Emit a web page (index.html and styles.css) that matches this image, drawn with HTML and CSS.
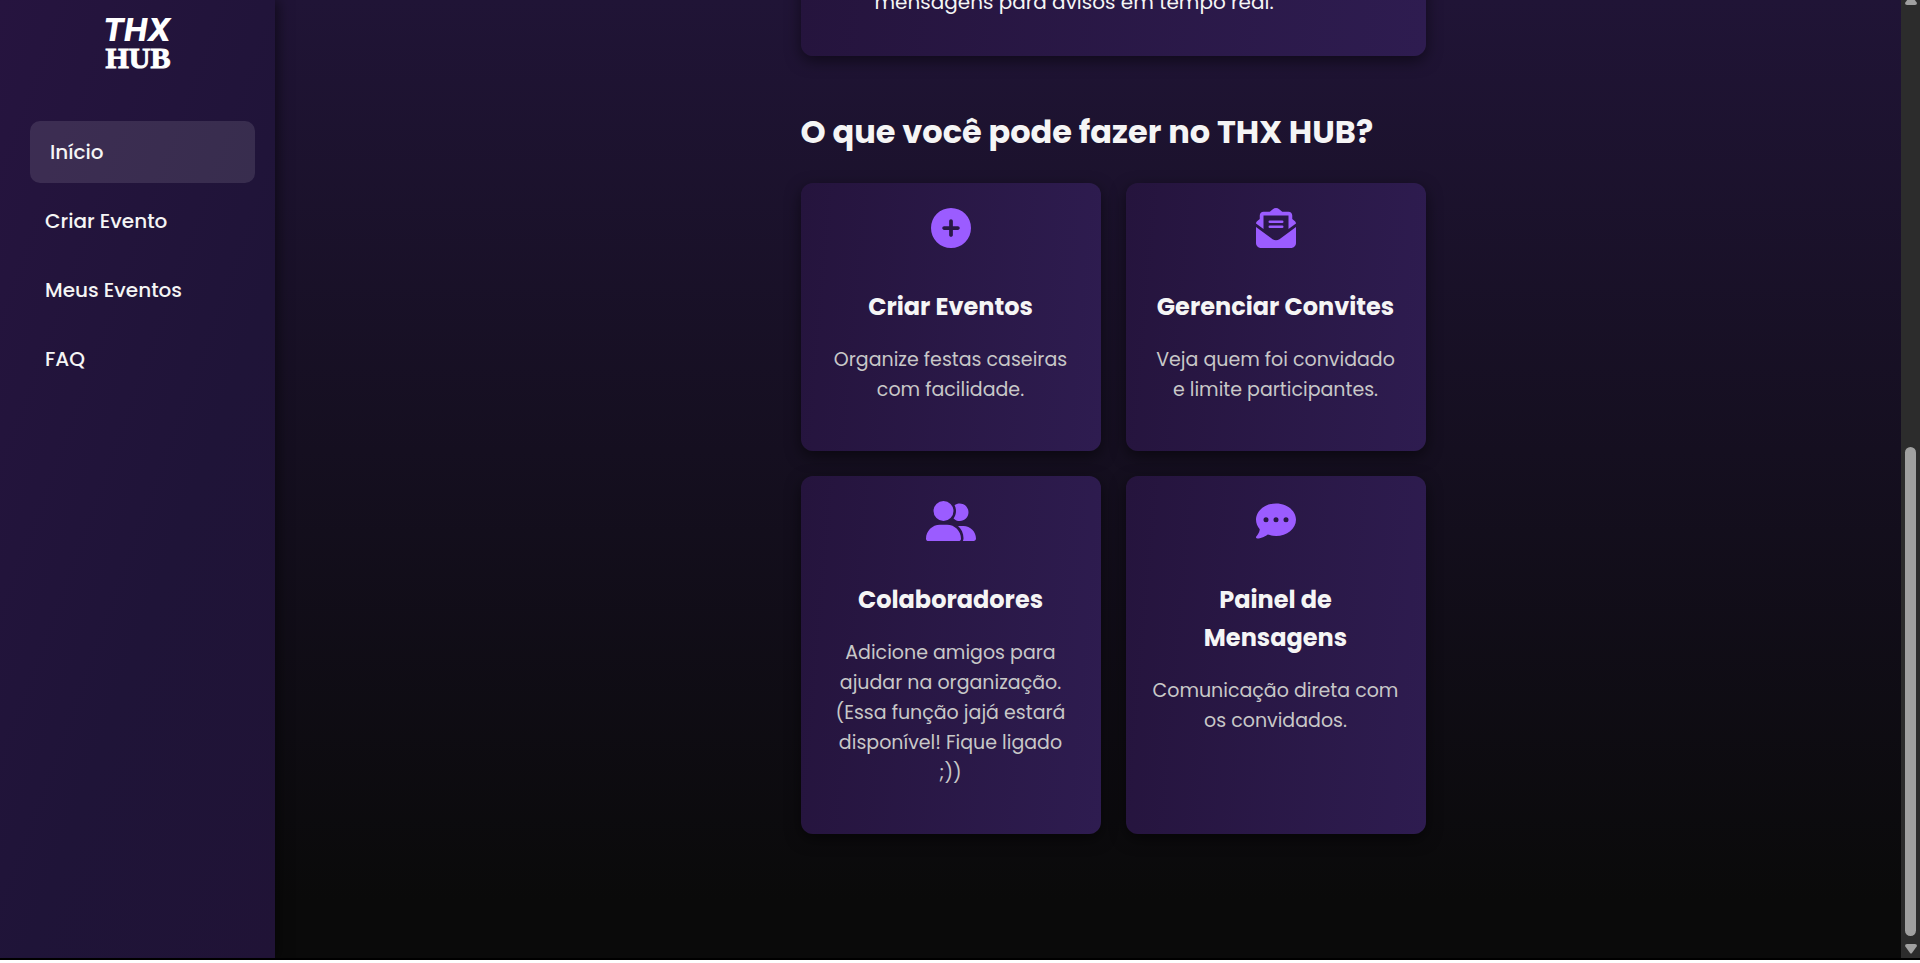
FILE: index.html
```html
<!DOCTYPE html>
<html lang="pt-BR">
<head>
<meta charset="utf-8">
<title>THX HUB</title>
<link rel="stylesheet" href="styles.css">
</head>
<body>
<div class="app">
  <aside class="sidebar">
    <svg class="logo" viewBox="0 0 90 72" role="img" aria-label="THX HUB">
      <text class="logo-top" x="44" y="41" text-anchor="middle">THX</text>
      <text class="logo-bottom" x="45" y="68" text-anchor="middle">HUB</text>
    </svg>
    <nav class="nav">
      <a class="nav-link active" href="#inicio">Início</a>
      <a class="nav-link" href="#criar">Criar Evento</a>
      <a class="nav-link" href="#eventos">Meus Eventos</a>
      <a class="nav-link" href="#faq">FAQ</a>
    </nav>
  </aside>
  <main class="main">
    <div class="content">
      <section class="intro">
        <p>mensagens para avisos em tempo real.</p>
      </section>
      <h2 class="title">O que você pode fazer no THX HUB?</h2>
      <div class="grid">
        <article class="card">
          <svg class="icon" viewBox="0 0 512 512"><path d="M256 512a256 256 0 1 0 0-512 256 256 0 1 0 0 512m-24-168v-64h-64c-13.300 0-24-10.700-24-24s10.700-24 24-24h64v-64c0-13.300 10.700-24 24-24s24 10.700 24 24v64h64c13.300 0 24 10.700 24 24s-10.700 24-24 24h-64v64c0 13.300-10.700 24-24 24s-24-10.700-24-24"/></svg>
          <h3>Criar Eventos</h3>
          <p>Organize festas caseiras com facilidade.</p>
        </article>
        <article class="card">
          <svg class="icon" viewBox="0 0 512 512"><path d="M215.400 16.400C226.800 6 241 0 256 0s29.200 6 40.600 16.400L336 48h80c26.500 0 48 21.500 48 48v44.500l31 25c10.500 8.500 17 20 17 31.500L416 268V96H96v172L0 197c0-11.500 6.500-23 17-31.500l31-25V96c0-26.500 21.500-48 48-48h80zM0 242l212 157c26 19 62 19 88 0l212-157v206c0 35.300-28.700 64-64 64H64c-35.300 0-64-28.700-64-64zM176 160h160a16 16 0 0 1 0 32H176a16 16 0 0 1 0-32m0 64h160a16 16 0 0 1 0 32H176a16 16 0 0 1 0-32"/></svg>
          <h3>Gerenciar Convites</h3>
          <p>Veja quem foi convidado e limite participantes.</p>
        </article>
        <article class="card">
          <svg class="icon icon-wide" viewBox="0 0 640 512"><path d="M96 128a128 128 0 1 1 256 0A128 128 0 1 1 96 128M0 482.300C0 383.800 79.800 304 178.300 304h91.400C368.200 304 448 383.800 448 482.300c0 16.400-13.300 29.700-29.700 29.700H29.700C13.300 512 0 498.700 0 482.300M609.300 512H471.400c5.400-9.400 8.600-20.300 8.600-32v-8c0-60.700-27.100-115.200-69.800-151.800 2.400-.1 4.700-.2 7.100-.2h61.400C567.800 320 640 392.200 640 481.300c0 17-13.800 30.700-30.700 30.700M432 256c-31 0-59-12.600-79.300-32.900C372.400 196.500 384 163.600 384 128c0-26.800-6.600-52.100-18.300-74.300C384.300 40.100 407.200 32 432 32c61.900 0 112 50.100 112 112s-50.100 112-112 112"/></svg>
          <h3>Colaboradores</h3>
          <p>Adicione amigos para ajudar na organização. (Essa função jajá estará disponível! Fique ligado ;))</p>
        </article>
        <article class="card">
          <svg class="icon" viewBox="0 0 512 512"><path d="M256 448c141.400 0 256-93.100 256-208S397.400 32 256 32 0 125.100 0 240c0 45.100 17.700 86.800 47.700 120.900-1.900 24.500-11.400 46.300-21.400 62.900-5.500 9.200-11.100 16.600-15.200 21.600-2.100 2.500-3.700 4.400-4.900 5.700-.6.600-1 1.100-1.300 1.400l-.3.300A16 16 0 0 0 16 480c28.700 0 57.600-8.900 81.600-19.300 22.900-10 42.400-21.900 54.300-30.600 31.800 11.500 67 17.900 104.100 17.900M128 208a32 32 0 1 1 0 64 32 32 0 1 1 0-64m128 0a32 32 0 1 1 0 64 32 32 0 1 1 0-64m96 32a32 32 0 1 1 64 0 32 32 0 1 1-64 0"/></svg>
          <h3>Painel de Mensagens</h3>
          <p>Comunicação direta com os convidados.</p>
        </article>
      </div>
    </div>
  </main>
  <div class="scrollbar" aria-hidden="true">
    <svg class="arrow" viewBox="0 0 12 10"><path d="M5 1Q6 0 7 1L12 8Q12 10 10 10H2Q0 10 0 8Z"/></svg>
    <div class="track"><div class="thumb"></div></div>
    <svg class="arrow" viewBox="0 0 12 10"><path d="M5 9Q6 10 7 9L12 2Q12 0 10 0H2Q0 0 0 2Z"/></svg>
  </div>
</div>
</body>
</html>
```
FILE: styles.css
```css
* { box-sizing: border-box; }

body {
  margin: 0;
  height: 100vh;
  overflow: hidden;
  padding-bottom: 3px;
  background: #fff;
  font-family: Poppins, Inter, sans-serif;
  font-size: 19px;
  line-height: 30px;
  color: #f5f5f5;
}

.app {
  display: flex;
  height: 100%;
  overflow: hidden;
  border-bottom: 2px solid #000;
  background: linear-gradient(180deg, #201436 0%, #0a0a0a 94%);
}

.sidebar {
  flex: none;
  width: 275px;
  padding: 0 20px 0 30px;
  background: linear-gradient(110deg, #26143f 0%, #1f1438 60%, #201336 100%);
  box-shadow: 3px 0 12px rgba(0, 0, 0, 0.5);
}

.logo {
  display: block;
  width: 90px;
  height: 72px;
  margin: 0 auto 49px 63px;
  fill: #fff;
}

.logo-top { font: italic 800 31px Inter, sans-serif; }
.logo-bottom { font: 700 30px "Liberation Serif", serif; stroke: #fff; stroke-width: 1px; }

.nav { display: flex; flex-direction: column; gap: 7px; }

.nav-link {
  padding: 15px;
  border-radius: 10px;
  font-size: 20px;
  line-height: 32px;
  font-weight: 500;
  color: #f5f5f5;
  text-decoration: none;
}

.nav-link.active { padding-left: 20px; background: rgba(255, 255, 255, 0.11); }

.main {
  flex: 1;
  display: flex;
  flex-direction: column;
  justify-content: flex-end;
  align-items: center;
  overflow: hidden;
  padding: 0 0 124px 50px;
}

.content { width: 625px; max-width: 100%; }

.intro,
.card {
  border-radius: 12px;
  background: linear-gradient(95deg, #25143d, #2e1c50);
  box-shadow: 0 5px 15px rgba(0, 0, 0, 0.5);
}

.intro { padding: 38px 74px; }
.intro p { margin: 0; font-size: 20px; line-height: 32px; }

.title {
  margin: 51px 0 26px;
  font-size: 32px;
  line-height: 50px;
  font-weight: 700;
}

.grid {
  display: grid;
  grid-template-columns: 1fr 1fr;
  gap: 25px;
}

.card { padding: 25px 25px 46px; text-align: center; }

.icon {
  display: block;
  width: 40px;
  height: 40px;
  margin: 0 auto 40px;
  fill: #9b5cff;
}

.icon-wide { width: 50px; }

.card h3 {
  margin: 0 0 19px;
  font-size: 24px;
  line-height: 38px;
  font-weight: 700;
}

.card p { margin: 0; color: #c8c8c8; }

.scrollbar {
  flex: none;
  width: 19px;
  display: flex;
  flex-direction: column;
  align-items: center;
  padding-bottom: 4px;
  background: #2c2c2c;
  overflow: hidden;
}

.arrow { flex: none; width: 12px; height: 10px; margin-top: -5px; fill: #a0a0a0; }
.arrow:last-child { margin-top: 8px; }

.track { flex: 1; display: flex; flex-direction: column; justify-content: flex-end; }
.thumb { width: 11px; height: 52.5%; border-radius: 6px; background: #a0a0a0; }
```
